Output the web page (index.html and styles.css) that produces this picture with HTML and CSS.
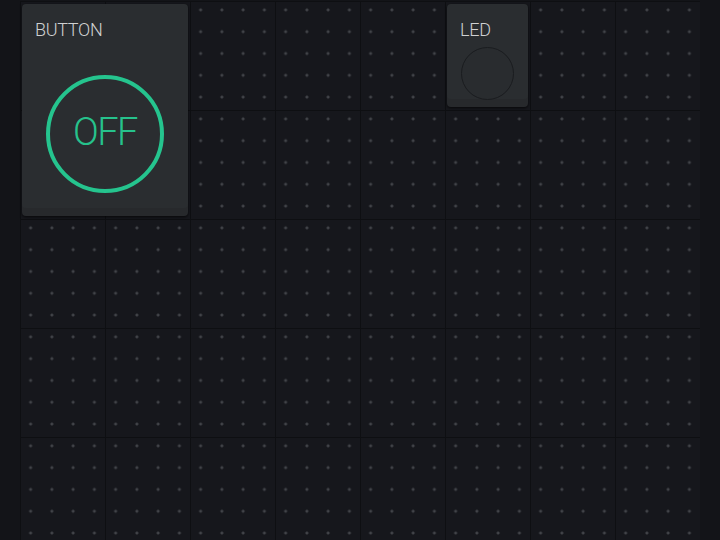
FILE: index.html
```html
<!DOCTYPE html>
<html>
<head>
<meta charset="utf-8">
<link rel="stylesheet" href="styles.css">
</head>
<body>
<div class="dashboard">
  <div class="widget widget-button">
    <div class="widget-label">BUTTON</div>
    <div class="widget-body button-body">
      <div class="toggle"><span class="toggle-text">OFF</span></div>
    </div>
  </div>
  <div class="widget widget-led">
    <div class="widget-label">LED</div>
    <div class="widget-body">
      <div class="led-lamp"></div>
    </div>
  </div>
</div>
</body>
</html>
```
FILE: styles.css
```css
html, body {
  margin: 0;
  padding: 0;
  width: 720px;
  height: 540px;
  overflow: hidden;
  background: #131418;
  font-family: Roboto, "Liberation Sans", sans-serif;
}

.dashboard {
  margin: 1px 0 0 20px;
  width: 680px;
  height: 545px;
  display: grid;
  grid-template-columns: repeat(8, 85px);
  grid-template-rows: repeat(5, 109px);
  background-color: #16171c;
  background-image:
    radial-gradient(circle at 50% 50%, #4a4c51 0, #3e4045 1px, rgba(62,64,69,0) 2px),
    linear-gradient(to right, #0e0f12 0, #0e0f12 1px, transparent 1px),
    linear-gradient(to bottom, #0e0f12 0, #0e0f12 1px, transparent 1px);
  background-size: 21.25px 21.8px, 85px 100%, 100% 109px;
  background-position: 0 -2px, 0 0, 0 0;
}

.widget {
  margin: 3px 2px;
  background: #2a2d30;
  border-radius: 4px;
  box-shadow: inset 0 -8px 0 rgba(0, 0, 0, 0.07), 0 1px 3px rgba(0, 0, 0, 0.7);
  display: flex;
  flex-direction: column;
}

.widget-button {
  grid-column: 1 / span 2;
  grid-row: 1 / span 2;
}

.widget-led {
  grid-column: 6;
  grid-row: 1;
}

.widget-label {
  padding: 16px 13px 0;
  height: 20px;
  line-height: 20px;
  font-size: 18px;
  font-weight: 300;
  color: #d0d1d2;
  letter-spacing: -0.3px;
}

.widget-body {
  flex: 1;
  display: flex;
  align-items: center;
  justify-content: center;
}

.button-body {
  padding-top: 12px;
}

.toggle {
  width: 118px;
  height: 118px;
  box-sizing: border-box;
  border: 4px solid #25c48e;
  border-radius: 50%;
  display: flex;
  align-items: center;
  justify-content: center;
}

.toggle-text {
  font-size: 38px;
  font-weight: 300;
  color: #26c28c;
  letter-spacing: -1.5px;
  margin-top: -4px;
  line-height: 1;
}

.led-lamp {
  width: 53px;
  height: 53px;
  box-sizing: border-box;
  border: 1.5px solid #1a1c1f;
  border-radius: 50%;
  background: #292c2f;
}
```
